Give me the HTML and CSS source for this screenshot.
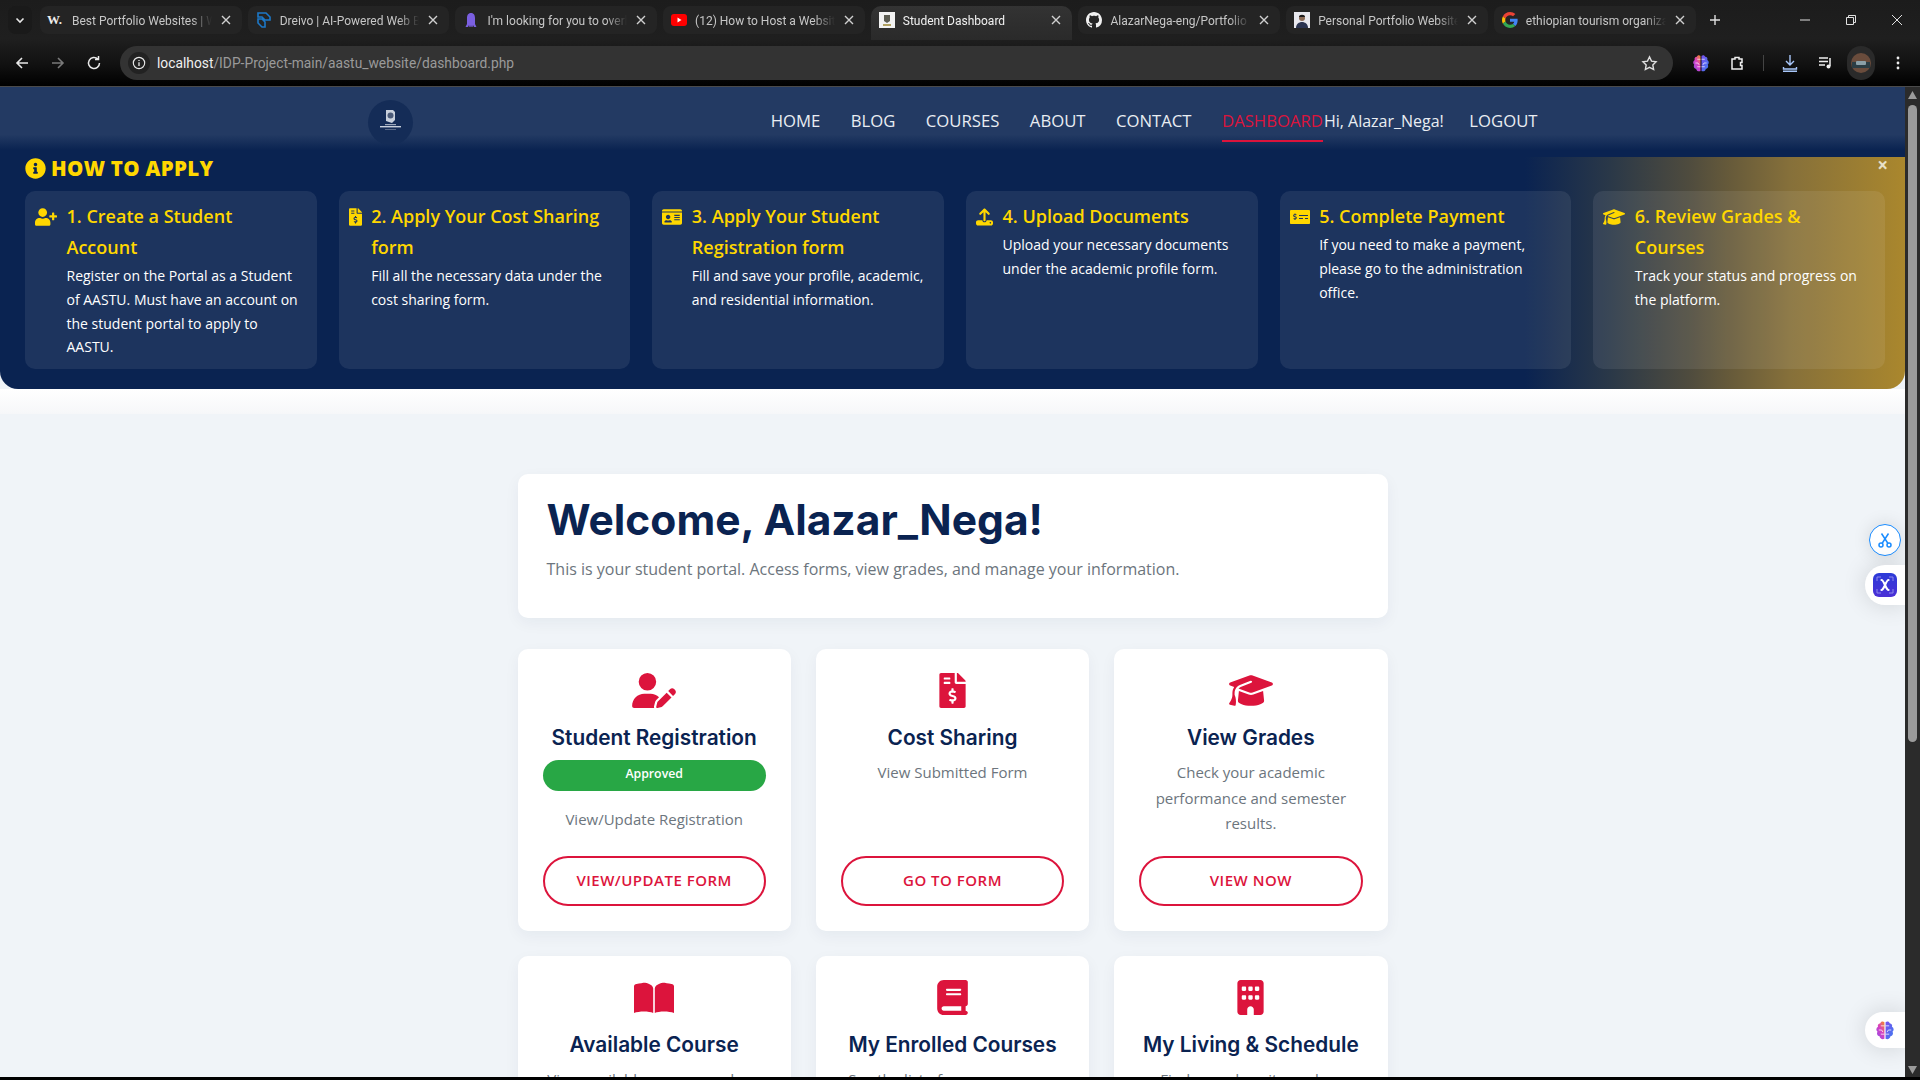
FILE: index.html
```html
<!DOCTYPE html>
<html lang="en">
<head>
<meta charset="utf-8">
<title>Student Dashboard</title>
<link rel="stylesheet" href="styles.css">
</head>
<body>
<svg class="defs" width="0" height="0">
  <defs>
    <linearGradient id="g-brain-l" x1="0.800" y1="0" x2="0" y2="1"><stop offset="0" stop-color="#f0803c"/><stop offset=".4" stop-color="#d83fc0"/><stop offset="1" stop-color="#8a50ee"/></linearGradient>
    <linearGradient id="g-brain-r" x1="0" y1="0" x2="1" y2="1"><stop offset="0" stop-color="#7a50ee"/><stop offset="1" stop-color="#3f7cf0"/></linearGradient>
  </defs>
  <symbol id="i-user-plus" viewBox="0 0 640 512"><path d="M624 208h-64v-64c0-8.800-7.200-16-16-16h-32c-8.800 0-16 7.200-16 16v64h-64c-8.800 0-16 7.200-16 16v32c0 8.800 7.200 16 16 16h64v64c0 8.800 7.200 16 16 16h32c8.800 0 16-7.200 16-16v-64h64c8.800 0 16-7.200 16-16v-32c0-8.800-7.200-16-16-16zm-400 48c70.700 0 128-57.300 128-128S294.700 0 224 0 96 57.300 96 128s57.300 128 128 128zm89.600 32h-16.700c-22.200 10.200-46.900 16-72.900 16s-50.600-5.800-72.900-16h-16.700C60.200 288 0 348.200 0 422.400V464c0 26.500 21.500 48 48 48h352c26.500 0 48-21.500 48-48v-41.600c0-74.200-60.200-134.400-134.400-134.400z"/></symbol>
  <symbol id="i-invoice" viewBox="0 0 384 512"><path d="M377 105L279.100 7c-4.500-4.500-10.600-7-17-7H256v128h128v-6.100c0-6.300-2.500-12.400-7-16.900zm-153 31V0H24C10.700 0 0 10.700 0 24v464c0 13.300 10.700 24 24 24h336c13.300 0 24-10.700 24-24V160H248c-13.200 0-24-10.800-24-24zM64 72c0-4.420 3.580-8 8-8h80c4.420 0 8 3.580 8 8v16c0 4.420-3.580 8-8 8H72c-4.420 0-8-3.580-8-8V72zm0 80v-16c0-4.420 3.580-8 8-8h80c4.420 0 8 3.580 8 8v16c0 4.420-3.580 8-8 8H72c-4.420 0-8-3.580-8-8zm144 263.880V440c0 4.420-3.580 8-8 8h-16c-4.420 0-8-3.580-8-8v-24.290c-11.290-.58-22.270-4.520-31.370-11.350-3.900-2.930-4.100-8.770-.57-12.140l11.750-11.210c2.770-2.640 6.890-2.760 10.130-.73 3.870 2.420 8.260 3.720 12.820 3.720h28.110c6.500 0 11.800-5.920 11.800-13.190 0-5.950-3.610-11.190-8.770-12.730l-45-13.500c-18.590-5.580-31.580-23.420-31.580-43.390 0-24.520 19.050-44.440 42.670-45.070V232c0-4.420 3.580-8 8-8h16c4.420 0 8 3.580 8 8v24.290c11.290.58 22.270 4.510 31.370 11.350 3.900 2.930 4.100 8.770.57 12.140l-11.750 11.210c-2.770 2.640-6.890 2.760-10.130.73-3.870-2.430-8.260-3.720-12.820-3.720h-28.110c-6.500 0-11.800 5.920-11.800 13.190 0 5.950 3.610 11.190 8.770 12.730l45 13.500c18.590 5.580 31.580 23.420 31.580 43.390 0 24.530-19.050 44.440-42.670 45.070z"/></symbol>
  <symbol id="i-cap" viewBox="0 0 640 512"><path d="M320 32c-8.100 0-16.100 1.400-23.700 4.100L15.800 137.400C6.300 140.900 0 149.900 0 160s6.300 19.100 15.800 22.600l57.900 20.900C57.300 229.300 48 259.800 48 291.900v28.100c0 28.400-10.800 57.700-22.300 80.800-6.500 13-13.900 25.800-22.500 37.600C0 442.700-.9 448.300 .9 453.400s6 8.900 11.200 10.200l64 16c4.200 1.100 8.700 .3 12.400-2s6.300-6.100 7.100-10.400c8.600-42.800 4.300-81.200-2.100-108.700C90.300 344.300 86 329.800 80 316.500V291.900c0-30.200 10.200-58.700 27.900-81.500c12.900-15.500 29.600-28 49.200-35.700l157-61.700c8.200-3.200 17.500 .8 20.700 9s-.8 17.500-9 20.700l-157 61.700c-12.400 4.900-23.300 12.400-32.200 21.600l159.600 57.600c7.600 2.700 15.600 4.100 23.700 4.100s16.100-1.400 23.700-4.100L624.200 182.600c9.500-3.400 15.800-12.500 15.800-22.600s-6.300-19.100-15.800-22.600L343.700 36.100C336.100 33.400 328.100 32 320 32zM128 408c0 35.300 86 72 192 72s192-36.700 192-72L496.700 262.600 354.500 314c-11.100 4-22.800 6-34.500 6s-23.500-2-34.500-6L143.300 262.600 128 408z"/></symbol>
  <symbol id="i-idcard" viewBox="0 0 576 512"><path d="M528 32H48C21.500 32 0 53.500 0 80v16h576V80c0-26.500-21.500-48-48-48zM0 432c0 26.500 21.500 48 48 48h480c26.500 0 48-21.500 48-48V128H0v304zm352-232c0-4.400 3.600-8 8-8h144c4.400 0 8 3.600 8 8v16c0 4.400-3.600 8-8 8H360c-4.400 0-8-3.600-8-8v-16zm0 64c0-4.400 3.600-8 8-8h144c4.400 0 8 3.600 8 8v16c0 4.400-3.600 8-8 8H360c-4.400 0-8-3.600-8-8v-16zm0 64c0-4.400 3.600-8 8-8h144c4.400 0 8 3.600 8 8v16c0 4.400-3.600 8-8 8H360c-4.400 0-8-3.600-8-8v-16zM176 192c35.300 0 64 28.700 64 64s-28.700 64-64 64-64-28.700-64-64 28.700-64 64-64zM67.100 396.200C75.500 370.500 99.600 352 128 352h8.200c12.300 5.100 25.700 8 39.800 8s27.600-2.900 39.800-8h8.200c28.400 0 52.500 18.500 60.900 44.200 3.200 9.900-5.200 19.800-15.600 19.800H82.700c-10.400 0-18.800-10-15.600-19.800z"/></symbol>
  <symbol id="i-upload" viewBox="0 0 512 512"><path d="M288 109.300V352c0 17.700-14.300 32-32 32s-32-14.300-32-32V109.300l-73.400 73.400c-12.500 12.500-32.800 12.500-45.300 0s-12.500-32.800 0-45.300l128-128c12.500-12.500 32.800-12.500 45.300 0l128 128c12.500 12.500 12.500 32.800 0 45.300s-32.800 12.500-45.300 0L288 109.300zM64 352H192c0 35.300 28.700 64 64 64s64-28.700 64-64H448c35.300 0 64 28.700 64 64v32c0 35.300-28.700 64-64 64H64c-35.300 0-64-28.700-64-64V416c0-35.300 28.700-64 64-64zM432 456a24 24 0 1 0 0-48 24 24 0 1 0 0 48z"/></symbol>
  <symbol id="i-money" viewBox="0 0 640 512"><path d="M608 32H32C14.330 32 0 46.330 0 64v384c0 17.670 14.330 32 32 32h576c17.670 0 32-14.330 32-32V64c0-17.670-14.330-32-32-32zM176 327.880V344c0 4.420-3.580 8-8 8h-16c-4.420 0-8-3.580-8-8v-16.290c-11.290-.58-22.270-4.520-31.370-11.350-3.900-2.930-4.100-8.770-.57-12.140l11.750-11.210c2.770-2.640 6.890-2.760 10.130-.73 3.870 2.420 8.260 3.720 12.820 3.720h28.110c6.500 0 11.800-5.920 11.800-13.190 0-5.950-3.610-11.190-8.770-12.730l-45-13.500c-18.590-5.580-31.580-23.420-31.580-43.390 0-24.520 19.050-44.440 42.670-45.070V152c0-4.420 3.580-8 8-8h16c4.420 0 8 3.580 8 8v16.290c11.290.58 22.270 4.510 31.370 11.350 3.900 2.930 4.100 8.770.57 12.140l-11.750 11.210c-2.770 2.640-6.890 2.760-10.130.73-3.870-2.430-8.260-3.720-12.820-3.720h-28.110c-6.500 0-11.800 5.920-11.800 13.190 0 5.950 3.610 11.190 8.770 12.730l45 13.500c18.590 5.580 31.580 23.420 31.580 43.390 0 24.530-19.050 44.440-42.670 45.070zM416 312c0 4.420-3.580 8-8 8H296c-4.420 0-8-3.580-8-8v-16c0-4.420 3.580-8 8-8h112c4.420 0 8 3.580 8 8v16zm160 0c0 4.420-3.580 8-8 8h-80c-4.420 0-8-3.580-8-8v-16c0-4.420 3.580-8 8-8h80c4.420 0 8 3.580 8 8v16zm0-96c0 4.420-3.580 8-8 8H296c-4.420 0-8-3.580-8-8v-16c0-4.420 3.580-8 8-8h272c4.420 0 8 3.580 8 8v16z"/></symbol>
  <symbol id="i-info" viewBox="0 0 512 512"><path d="M256 8C119.043 8 8 119.083 8 256c0 136.997 111.043 248 248 248s248-111.003 248-248C504 119.083 392.957 8 256 8zm0 110c23.196 0 42 18.804 42 42s-18.804 42-42 42-42-18.804-42-42 18.804-42 42-42zm56 254c0 6.627-5.373 12-12 12h-88c-6.627 0-12-5.373-12-12v-24c0-6.627 5.373-12 12-12h12v-64h-12c-6.627 0-12-5.373-12-12v-24c0-6.627 5.373-12 12-12h64c6.627 0 12 5.373 12 12v100h12c6.627 0 12 5.373 12 12v24z"/></symbol>
  <symbol id="i-user-pen" viewBox="0 0 640 512"><path d="M224 256A128 128 0 1 0 224 0a128 128 0 1 0 0 256zm-45.700 48C79.800 304 0 383.800 0 482.300C0 498.700 13.300 512 29.700 512H322.800c-3.100-8.800-3.700-18.400-1.400-27.800l15-60.100c2.800-11.300 8.600-21.500 16.800-29.700l40.300-40.300c-32.100-31-75.700-50.100-123.900-50.100H178.300zm435.500-68.300c-15.600-15.600-40.900-15.600-56.600 0l-29.400 29.400 71 71 29.400-29.400c15.600-15.600 15.600-40.900 0-56.600l-14.400-14.400zM375.900 417c-4.100 4.100-7 9.200-8.400 14.900l-15 60.100c-1.400 5.500 .2 11.200 4.200 15.200s9.700 5.600 15.200 4.200l60.100-15c5.600-1.400 10.800-4.300 14.900-8.400L576.100 358.700l-71-71L375.900 417z"/></symbol>
  <symbol id="i-book-open" viewBox="0 0 40 35"><path d="M0 6.500C0 5 1 4 2.500 4 8 3 12 2 14 3.500c3 1 5.200 2.800 5.200 5V33C15 31 5 31 0 33zM40 6.500C40 5 39 4 37.500 4 32 3 28 2 26 3.500c-3 1-5.200 2.800-5.200 5V33c4.200-2 14.200-2 19.200 0z"/></symbol>
  <symbol id="i-book" viewBox="0 0 448 512"><path d="M96 0C43 0 0 43 0 96V416c0 53 43 96 96 96H384h32c17.700 0 32-14.300 32-32s-14.300-32-32-32V384c17.700 0 32-14.300 32-32V32c0-17.700-14.300-32-32-32H384 96zm0 384H352v64H96c-17.700 0-32-14.300-32-32s14.300-32 32-32zm32-240c0-8.800 7.200-16 16-16H336c8.800 0 16 7.200 16 16s-7.200 16-16 16H144c-8.800 0-16-7.200-16-16zm16 48H336c8.800 0 16 7.200 16 16s-7.200 16-16 16H144c-8.800 0-16-7.200-16-16s7.200-16 16-16z"/></symbol>
  <symbol id="i-building" viewBox="0 0 384 512"><path d="M48 0C21.500 0 0 21.500 0 48V464c0 26.500 21.500 48 48 48h96V432c0-26.500 21.500-48 48-48s48 21.500 48 48v80h96c26.500 0 48-21.500 48-48V48c0-26.500-21.500-48-48-48H48zM64 240c0-8.800 7.200-16 16-16h32c8.800 0 16 7.200 16 16v32c0 8.800-7.200 16-16 16H80c-8.800 0-16-7.200-16-16V240zm112-16h32c8.800 0 16 7.200 16 16v32c0 8.800-7.200 16-16 16H176c-8.800 0-16-7.200-16-16V240c0-8.800 7.200-16 16-16zm80 16c0-8.800 7.200-16 16-16h32c8.800 0 16 7.200 16 16v32c0 8.800-7.200 16-16 16H272c-8.800 0-16-7.200-16-16V240zM80 96h32c8.800 0 16 7.200 16 16v32c0 8.800-7.200 16-16 16H80c-8.800 0-16-7.200-16-16V112c0-8.800 7.200-16 16-16zm80 16c0-8.800 7.200-16 16-16h32c8.800 0 16 7.200 16 16v32c0 8.800-7.200 16-16 16H176c-8.800 0-16-7.200-16-16V112zM272 96h32c8.800 0 16 7.200 16 16v32c0 8.800-7.200 16-16 16H272c-8.800 0-16-7.200-16-16V112c0-8.800 7.200-16 16-16z"/></symbol>
  <symbol id="i-x" viewBox="0 0 12 12"><path d="M2 2l8 8M10 2l-8 8" stroke="currentColor" stroke-width="1.400" fill="none"/></symbol>
  <symbol id="i-brain" viewBox="0 0 24 24"><path fill="url(#g-brain-l)" d="M11.300 2.800C9.700 1 7 1.600 6.400 3.800 4.100 4 2.800 6.100 3.600 8.100 1.200 9.300 .9 12.600 3 14.200c-1.400 2.200-.1 5.200 2.500 5.400.3 2.900 3.400 4.300 5.800 2.900z"/><path fill="url(#g-brain-r)" d="M12.700 2.800C14.300 1 17 1.600 17.600 3.800c2.300.2 3.600 2.300 2.800 4.300 2.400 1.200 2.700 4.500.6 6.100 1.400 2.200.1 5.200-2.500 5.400-.3 2.900-3.400 4.300-5.800 2.900z"/><path fill="none" stroke="#fff" stroke-width=".9" d="M7 7h4.300M4.500 12h3.500l1.500 2.500M7 17h4.300M17 7h-4.300M19.500 12H16l-1.500 2.500M17 17h-4.300"/></symbol>
</svg>

<header class="chrome">
  <div class="tabstrip">
    <div class="tab-menu"><svg width="10" height="10" viewBox="0 0 10 10"><path d="M1.500 3.500L5 7l3.500-3.500" fill="none" stroke="#e8e8e8" stroke-width="1.600"/></svg></div>
    <div class="tab"><span class="fav fav-w">W.</span><span class="tab-title">Best Portfolio Websites | Webflow</span><svg class="tab-x"><use href="#i-x"/></svg></div>
    <div class="tab"><svg class="fav" viewBox="0 0 16 16"><path d="M2 1h8l4 4v3H9L6 5H2zM2 7h4l3 3v5H6L2 11z" fill="none" stroke="#1c78c8" stroke-width="1.600"/></svg><span class="tab-title">Dreivo | AI-Powered Web Builder</span><svg class="tab-x"><use href="#i-x"/></svg></div>
    <div class="tab"><svg class="fav" viewBox="0 0 16 16"><path d="M8 1C5 1 4 3.500 4 6v6l-1.500 3H5l1-2 .5 2h1l.5-2 .5 2h1l.5-2 1 2h2.500L12 12V6c0-2.500-1-5-4-5z" fill="#7a5fe0"/></svg><span class="tab-title">I'm looking for you to overhaul</span><svg class="tab-x"><use href="#i-x"/></svg></div>
    <div class="tab"><svg class="fav" viewBox="0 0 16 16"><rect y="2" width="16" height="12" rx="3" fill="#f00"/><path d="M6.500 5.500v5l4-2.500z" fill="#fff"/></svg><span class="tab-title">(12) How to Host a Website</span><svg class="tab-x"><use href="#i-x"/></svg></div>
    <div class="tab tab-active"><svg class="fav" viewBox="0 0 16 16"><rect width="16" height="16" fill="#f2f2f2"/><path d="M5 3h6v6l-3 2-3-2z" fill="#5c5c52"/><rect x="4" y="12" width="8" height="2" fill="#b0a060"/></svg><span class="tab-title">Student Dashboard</span><svg class="tab-x"><use href="#i-x"/></svg></div>
    <div class="tab"><svg class="fav" viewBox="0 0 16 16"><path fill="#f0f0f0" d="M8 0C3.580 0 0 3.580 0 8c0 3.540 2.290 6.530 5.470 7.590.4.070.55-.17.55-.38 0-.19-.01-.82-.01-1.490-2.010.37-2.530-.49-2.690-.94-.09-.23-.48-.94-.82-1.130-.28-.15-.68-.52-.01-.53.63-.01 1.080.58 1.230.82.72 1.210 1.870.87 2.330.66.07-.52.28-.87.51-1.070-1.780-.2-3.640-.89-3.640-3.950 0-.87.31-1.590.82-2.150-.08-.2-.36-1.020.08-2.120 0 0 .67-.21 2.200.82.64-.18 1.320-.27 2-.27.68 0 1.360.09 2 .27 1.530-1.040 2.200-.82 2.200-.82.44 1.100.16 1.920.08 2.120.51.56.82 1.270.82 2.150 0 3.070-1.870 3.750-3.650 3.950.29.25.54.73.54 1.480 0 1.070-.01 1.930-.01 2.200 0 .21.15.46.55.38A8.013 8.013 0 0016 8c0-4.420-3.580-8-8-8z"/></svg><span class="tab-title">AlazarNega-eng/Portfolio</span><svg class="tab-x"><use href="#i-x"/></svg></div>
    <div class="tab"><svg class="fav" viewBox="0 0 16 16"><rect width="16" height="16" fill="#e8e8ee"/><circle cx="8" cy="6" r="3" fill="#8a6a55"/><path d="M2 16c0-4 3-6 6-6s6 2 6 6z" fill="#2a3350"/><path d="M5 5c0-3 6-3 6 0z" fill="#1a1a1a"/></svg><span class="tab-title">Personal Portfolio Website</span><svg class="tab-x"><use href="#i-x"/></svg></div>
    <div class="tab"><svg class="fav" viewBox="0 0 48 48"><path fill="#EA4335" d="M24 9.500c3.540 0 6.710 1.220 9.210 3.600l6.850-6.850C35.900 2.380 30.470 0 24 0 14.620 0 6.510 5.380 2.560 13.220l7.980 6.190C12.430 13.720 17.740 9.500 24 9.500z"/><path fill="#4285F4" d="M46.980 24.550c0-1.570-.15-3.090-.38-4.550H24v9.020h12.940c-.58 2.960-2.260 5.480-4.780 7.180l7.730 6c4.510-4.180 7.090-10.360 7.090-17.650z"/><path fill="#FBBC05" d="M10.530 28.590c-.48-1.450-.76-2.990-.76-4.590s.27-3.140.76-4.590l-7.980-6.190C.92 16.460 0 20.120 0 24c0 3.880.92 7.540 2.560 10.780l7.970-6.190z"/><path fill="#34A853" d="M24 48c6.480 0 11.930-2.130 15.890-5.810l-7.730-6c-2.150 1.450-4.920 2.300-8.160 2.300-6.260 0-11.570-4.220-13.470-9.910l-7.980 6.190C6.510 42.620 14.620 48 24 48z"/></svg><span class="tab-title">ethiopian tourism organization</span><svg class="tab-x"><use href="#i-x"/></svg></div>
    <svg class="tab-plus" viewBox="0 0 12 12"><path d="M6 1v10M1 6h10" stroke="#e0e0e0" stroke-width="1.400"/></svg>
    <div class="win-controls">
      <svg viewBox="0 0 12 12"><path d="M1 6h10" stroke="#e0e0e0"/></svg>
      <svg viewBox="0 0 12 12"><path d="M1.500 3.500h7v7h-7zM3.500 3.500v-2h7v7h-2" fill="none" stroke="#e0e0e0"/></svg>
      <svg viewBox="0 0 12 12"><path d="M1 1l10 10M11 1L1 11" stroke="#e0e0e0"/></svg>
    </div>
  </div>
  <div class="toolbar">
    <svg class="tb-ic" viewBox="0 0 16 16"><path d="M14 8H3M8 3L3 8l5 5" fill="none" stroke="#e8e8e8" stroke-width="1.600"/></svg>
    <svg class="tb-ic" viewBox="0 0 16 16"><path d="M2 8h11M8 3l5 5-5 5" fill="none" stroke="#7a7a7a" stroke-width="1.600"/></svg>
    <svg class="tb-ic" viewBox="0 0 16 16"><path d="M13.500 8A5.500 5.500 0 1 1 11.800 4M12.500 1v3.500H9" fill="none" stroke="#e8e8e8" stroke-width="1.500"/></svg>
    <div class="omnibox">
      <span class="site-info"><svg viewBox="0 0 16 16" width="14" height="14"><circle cx="8" cy="8" r="6.500" fill="none" stroke="#e8e8e8" stroke-width="1.300"/><path d="M8 7v4.500M8 4.500v1.300" stroke="#e8e8e8" stroke-width="1.500"/></svg></span>
      <span class="url"><span class="url-host">localhost</span>/IDP-Project-main/aastu_website/dashboard.php</span>
      <svg class="star" viewBox="0 0 16 16"><path d="M8 1.800l1.900 4 4.300.6-3.100 3 .8 4.300L8 11.600l-3.900 2.100.8-4.300-3.100-3 4.300-.6z" fill="none" stroke="#e0e0e0" stroke-width="1.300"/></svg>
    </div>
    <div class="tb-right">
      <svg class="tb-ic brain"><use href="#i-brain"/></svg>
      <svg class="tb-ic ext" viewBox="0 0 16 16"><path d="M3 4h3V2.500h4V4h3v3.500h-1.500v3H13V14H3z" fill="none" stroke="#f0f0f0" stroke-width="1.500"/></svg>
      <span class="tb-sep"></span>
      <svg class="tb-ic dl" viewBox="0 0 16 18"><path d="M8 1v9M4 7l4 4 4-4M1.500 13v2h13v-2" fill="none" stroke="#a8c7fa" stroke-width="1.400"/><rect x="1" y="16.500" width="14" height="1.500" fill="#a8c7fa"/></svg>
      <svg class="tb-ic" viewBox="0 0 16 16"><path d="M1 3h9M1 6.500h9M1 10h6" stroke="#eee" stroke-width="1.500"/><path d="M12 3v8" stroke="#eee" stroke-width="1.500"/><circle cx="10.500" cy="11.500" r="2" fill="#eee"/></svg>
      <span class="avatar"><svg viewBox="0 0 20 20" width="20" height="20"><circle cx="10" cy="10" r="10" fill="#6a4c3c"/><rect x="1" y="9" width="18" height="6" fill="#2b3d44"/><rect x="5" y="8" width="10" height="4" rx="1" fill="#8ba0a8"/></svg></span>
      <svg class="tb-ic" viewBox="0 0 16 16"><circle cx="8" cy="3" r="1.400" fill="#eee"/><circle cx="8" cy="8" r="1.400" fill="#eee"/><circle cx="8" cy="13" r="1.400" fill="#eee"/></svg>
    </div>
  </div>
</header>

<div class="window">
  <div class="viewport">
    <nav class="site-header">
      <div class="site-container">
        <span class="logo"><svg viewBox="0 0 44 44" width="44" height="44"><path d="M18 10h7l2 2v8l-3 3-6-2z" fill="#c8d0dc"/><circle cx="22.500" cy="15.500" r="3" fill="#4a5a78"/><rect x="17" y="24" width="11" height="1.200" fill="#9aa6ba"/><rect x="12" y="26" width="21" height="1.400" fill="#c8d0dc"/><rect x="17" y="29" width="11" height="1" fill="#5a6a88"/></svg></span>
        <ul class="site-nav">
          <li><a class="nav-link">HOME</a></li>
          <li><a class="nav-link">BLOG</a></li>
          <li><a class="nav-link">COURSES</a></li>
          <li><a class="nav-link">ABOUT</a></li>
          <li><a class="nav-link">CONTACT</a></li>
          <li class="nav-tight"><a class="nav-link is-active">DASHBOARD</a><a class="nav-link nav-greet">Hi, Alazar_Nega!</a></li>
          <li><a class="nav-link">LOGOUT</a></li>
        </ul>
      </div>
    </nav>

    <section class="apply">
      <span class="apply-close">×</span>
      <h2 class="apply-title"><svg class="apply-info"><use href="#i-info"/></svg>HOW TO APPLY</h2>
      <div class="steps">
        <article class="step">
          <svg class="step-ic ic-22"><use href="#i-user-plus"/></svg>
          <div class="step-body"><h3>1. Create a Student Account</h3><p>Register on the Portal as a Student of AASTU. Must have an account on the student portal to apply to AASTU.</p></div>
        </article>
        <article class="step">
          <svg class="step-ic ic-13"><use href="#i-invoice"/></svg>
          <div class="step-body"><h3>2. Apply Your Cost Sharing form</h3><p>Fill all the necessary data under the cost sharing form.</p></div>
        </article>
        <article class="step">
          <svg class="step-ic ic-20"><use href="#i-idcard"/></svg>
          <div class="step-body"><h3>3. Apply Your Student Registration form</h3><p>Fill and save your profile, academic, and residential information.</p></div>
        </article>
        <article class="step">
          <svg class="step-ic ic-17"><use href="#i-upload"/></svg>
          <div class="step-body"><h3>4. Upload Documents</h3><p>Upload your necessary documents under the academic profile form.</p></div>
        </article>
        <article class="step">
          <svg class="step-ic ic-20"><use href="#i-money"/></svg>
          <div class="step-body"><h3>5. Complete Payment</h3><p>If you need to make a payment, please go to the administration office.</p></div>
        </article>
        <article class="step">
          <svg class="step-ic ic-22"><use href="#i-cap"/></svg>
          <div class="step-body"><h3>6. Review Grades &amp; Courses</h3><p>Track your status and progress on the platform.</p></div>
        </article>
      </div>
    </section>

    <div class="band"></div>

    <main class="dash">
      <div class="dash-inner">
        <section class="welcome">
          <h1>Welcome, Alazar_Nega!</h1>
          <p>This is your student portal. Access forms, view grades, and manage your information.</p>
        </section>
        <div class="cards">
          <article class="card">
            <svg class="card-ic w-44"><use href="#i-user-pen"/></svg>
            <h3>Student Registration</h3>
            <span class="badge">Approved</span>
            <p>View/Update Registration</p>
            <a class="btn">VIEW/UPDATE FORM</a>
          </article>
          <article class="card">
            <svg class="card-ic w-27"><use href="#i-invoice"/></svg>
            <h3>Cost Sharing</h3>
            <p>View Submitted Form</p>
            <a class="btn">GO TO FORM</a>
          </article>
          <article class="card">
            <svg class="card-ic w-44"><use href="#i-cap"/></svg>
            <h3>View Grades</h3>
            <p>Check your academic performance and semester results.</p>
            <a class="btn">VIEW NOW</a>
          </article>
          <article class="card">
            <svg class="card-ic w-40"><use href="#i-book-open"/></svg>
            <h3>Available Course</h3>
            <p>View available courses and are currently open.</p>
            <a class="btn">VIEW COURSES</a>
          </article>
          <article class="card">
            <svg class="card-ic w-31"><use href="#i-book"/></svg>
            <h3>My Enrolled Courses</h3>
            <p>See the list of courses you are currently taking.</p>
            <a class="btn">VIEW COURSES</a>
          </article>
          <article class="card">
            <svg class="card-ic w-27"><use href="#i-building"/></svg>
            <h3>My Living &amp; Schedule</h3>
            <p>Find your dormitory, class schedule and details.</p>
            <a class="btn">VIEW NOW</a>
          </article>
        </div>
      </div>
    </main>

    <div class="float-scissors"><svg viewBox="0 0 16 16" width="16" height="16"><circle cx="4" cy="13" r="2" fill="none" stroke="#1a8cff" stroke-width="1.500"/><circle cx="12" cy="13" r="2" fill="none" stroke="#1a8cff" stroke-width="1.500"/><path d="M5 11.500L11.500 1.500M11 11.500L4.500 1.500" stroke="#1a8cff" stroke-width="1.500"/></svg></div>
    <div class="float-pill float-x"><span class="x-tile"><svg viewBox="0 0 24 24" width="24" height="24"><path d="M8.500 7c2.500 0 4.500 10 7 10M15.500 7c-2.500 0-4.500 10-7 10" fill="none" stroke="#fff" stroke-width="2.200" stroke-linecap="round"/><path d="M4 8V4h4M20 8V4h-4M4 16v4h4M20 16v4h-4" fill="none" stroke="#8f89ea" stroke-width="1"/></svg></span></div>
    <div class="float-pill float-brain"><svg width="20" height="20"><use href="#i-brain"/></svg></div>
  </div>
  <aside class="scrollbar">
    <svg class="sb-arrow" viewBox="0 0 9 8"><path d="M4.500 0L9 8H0z" fill="#9b9b9b"/></svg>
    <div class="sb-track"><div class="sb-thumb"></div></div>
    <svg class="sb-arrow" viewBox="0 0 9 8"><path d="M0 0h9L4.500 8z" fill="#9b9b9b"/></svg>
  </aside>
</div>
<div class="bottom-edge"></div>
</body>
</html>
```

FILE: styles.css
```css
* { box-sizing: border-box; }
html, body { margin: 0; height: 100%; }
body {
  height: 1080px;
  overflow: hidden;
  display: flex;
  flex-direction: column;
  background: #000;
  font-family: "Open Sans", "Liberation Sans", sans-serif;
}
.defs { position: absolute; }
h1, h2, h3, p, ul { margin: 0; padding: 0; }
ul { list-style: none; }

/* browser chrome */
.chrome {
  height: 86px;
  flex: none;
  background: linear-gradient(#1c1c1c 0, #1f1f1f 45%, #111 75%, #000 100%);
  display: flex;
  flex-direction: column;
}
.tabstrip {
  height: 40px;
  display: flex;
  align-items: flex-start;
  padding-top: 6px;
  flex: none;
}
.tab-menu {
  width: 24px;
  height: 28px;
  margin: 0 8px 0 8px;
  border-radius: 8px;
  background: #1a1a1a;
  display: flex;
  align-items: center;
  justify-content: center;
}
.tab {
  width: 201.700px;
  height: 28px;
  margin-right: 6px;
  border-radius: 8px;
  background: #242424;
  display: flex;
  align-items: center;
  padding: 2px 10px 0 8px;
  color: #c7c7c7;
  font: 12px "Roboto", "Liberation Sans", sans-serif;
  position: relative;
}
.tab-active {
  height: 34px;
  background: linear-gradient(#333, #2a2a2a);
  border-radius: 10px 10px 0 0;
  color: #f1f1f1;
  padding-bottom: 6px;
}
.fav { width: 16px; height: 16px; flex: none; margin-right: 8px; margin-top: -2px; }
.fav-w { color: #eee; font: 700 13px/16px "Liberation Serif", serif; width: 18px; margin-right: 7px; margin-left: -1px; }
.tab-title {
  flex: 1;
  min-width: 0;
  white-space: nowrap;
  overflow: hidden;
  -webkit-mask-image: linear-gradient(90deg, #000 85%, transparent);
  mask-image: linear-gradient(90deg, #000 85%, transparent);
}
.tab-x { width: 12px; height: 12px; flex: none; margin: -2px 0 0 8px; color: #d0d0d0; }
.tab-plus { width: 12px; height: 12px; margin: 8px 0 0 7px; flex: none; }
.win-controls { margin-left: auto; display: flex; gap: 34px; padding: 8px 17px 0 0; }
.win-controls svg { width: 12px; height: 12px; }

.toolbar {
  flex: none;
  height: 34px;
  margin-top: 6px;
  display: flex;
  align-items: center;
  padding-left: 14px;
}
.tb-ic { width: 16px; height: 16px; flex: none; margin-right: 20px; }
.omnibox {
  width: 1553px;
  height: 34px;
  margin-left: -2px;
  border-radius: 17px;
  background: #333;
  display: flex;
  align-items: center;
  padding: 0 15px 0 8px;
}
.site-info {
  width: 22px; height: 22px; border-radius: 50%;
  background: #222;
  display: flex; align-items: center; justify-content: center;
  flex: none;
  margin-right: 7px;
}
.url { flex: 1; font: 13.800px "Roboto", "Liberation Sans", sans-serif; color: #9a9a9a; white-space: nowrap; }
.url-host { color: #f0f0f0; }
.star { width: 17px; height: 17px; }
.tb-right { display: flex; align-items: center; padding-left: 19px; }
.tb-right .tb-ic { margin-right: 20px; }
.tb-right .brain { width: 18px; height: 18px; margin-right: 19px; }
.tb-right .ext { margin-right: 18px; }
.tb-right .dl { height: 18px; margin-right: 20px; }
.tb-sep { width: 1px; height: 16px; background: #444; margin-right: 18px; }
.avatar {
  width: 28px; height: 34px; border-radius: 14px; background: #2a2a2a;
  display: flex; align-items: center; justify-content: center;
  margin-right: 15px; margin-left: -7px; flex: none;
}
.tb-right .avatar + .tb-ic { margin-right: 0; }

/* window */
.window { flex: 1; min-height: 0; display: flex; border-top: 1px solid #4a4a4a; }
.viewport {
  flex: 1;
  min-width: 0;
  overflow: hidden;
  position: relative;
  background: #f0f4f8;
}
.bottom-edge { height: 3px; flex: none; background: #000; }

/* scrollbar */
.scrollbar {
  width: 15px;
  flex: none;
  background: #2b2b2b;
  display: flex;
  flex-direction: column;
  align-items: center;
  padding: 4px 0 3px;
}
.sb-arrow { width: 9px; height: 8px; flex: none; }
.sb-track { flex: 1; width: 9px; padding-top: 6px; }
.sb-thumb { height: 637px; border-radius: 5px; background: #9b9b9b; }

/* site header */
.site-header {
  height: 70px;
  background: linear-gradient(#233a63 0, #233a63 68%, #0a2351 90%);
}
.site-container {
  width: 1200px;
  margin: 0 auto;
  padding: 0 15px;
  height: 70px;
  display: flex;
  align-items: center;
  justify-content: space-between;
}
.logo {
  width: 45px; height: 45px; border-radius: 50%;
  background: #142c57;
  display: block;
}
.site-nav { display: flex; gap: 30.500px; margin-top: -2px; }
.nav-tight { display: flex; margin-right: -5px; }
.nav-link {
  display: block;
  position: relative;
  color: #e9edf2;
  font-size: 16.700px;
  font-weight: 500;
  line-height: 24px;
  white-space: nowrap;
}
.nav-greet { font-size: 16px; margin-left: 1px; }
.is-active { color: #dc143c; }
.is-active::after {
  content: "";
  position: absolute;
  left: 0; right: 0; top: 31px;
  height: 2px;
  background: #dc143c;
}

/* how to apply */
.apply {
  position: relative;
  padding: 0 20px 20px 25px;
  border-radius: 0 0 18px 18px;
  background: linear-gradient(90deg, #0a2351 0, #0a2351 1525px, #2a3848 1610px, #4e4b3e 1688px, #665a3a 1729px, #86703a 1790px, #aa872d 1905px);
}
.apply-close {
  position: absolute;
  right: 17px; top: 1px;
  color: #e8e0c8;
  font-size: 19px;
  font-weight: 700;
  line-height: 14px;
}
.apply-title {
  display: flex;
  align-items: center;
  height: 22px;
  margin-bottom: 12px;
  color: #ffd700;
  font-size: 20.500px;
  font-weight: 800;
  letter-spacing: .3px;
  line-height: 22px;
}
.apply-info { width: 21px; height: 21px; fill: #ffd700; margin-right: 5px; flex: none; }
.steps { display: grid; grid-template-columns: repeat(6, 1fr); gap: 22px; }
.step {
  display: flex;
  gap: 9.500px;
  padding: 10px;
  border-radius: 10px;
  background: rgba(255, 255, 255, .08);
}
.step-ic { height: 18px; fill: #ffd700; flex: none; margin-top: 7px; }
.ic-22 { width: 22px; }
.ic-13 { width: 13px; }
.ic-20 { width: 20px; }
.ic-17 { width: 17px; }
.step-body { flex: 1; min-width: 0; padding-right: 1px; }
.step h3 {
  color: #ffd700;
  font-size: 18px;
  font-weight: 600;
  line-height: 31px;
  margin-bottom: 1px;
}
.step p { color: #fff; font-size: 14px; line-height: 23.800px; }

.band { height: 25px; background: linear-gradient(#fff, #f6f7f9); }

/* dashboard */
.dash { padding-top: 60px; background: #f0f4f8; }
.dash-inner { width: 870px; margin: 0 auto; }
.welcome {
  height: 144px;
  padding: 21px 30px 0 29px;
  border-radius: 10px;
  background: #fff;
  box-shadow: 0 5px 15px rgba(10, 35, 81, .05);
  margin-bottom: 31px;
}
.welcome h1 {
  color: #0a2351;
  font-family: "Inter", "Liberation Sans", sans-serif;
  font-size: 42.500px;
  font-weight: 700;
  line-height: 50px;
  margin-bottom: 11px;
}
.welcome p { color: #6c757d; font-size: 16px; line-height: 26px; }
.cards { display: grid; grid-template-columns: repeat(3, 1fr); gap: 25px; }
.card {
  display: flex;
  flex-direction: column;
  align-items: center;
  text-align: center;
  padding: 24px 25px 25px;
  border-radius: 10px;
  background: #fff;
  box-shadow: 0 5px 15px rgba(10, 35, 81, .05);
}
.card-ic { height: 35px; fill: #dc143c; flex: none; margin-bottom: 14px; }
.w-44 { width: 44px; }
.w-40 { width: 40px; }
.w-31 { width: 31px; }
.w-27 { width: 27px; }
.card h3 {
  color: #0a2351;
  font-family: "Inter", "Liberation Sans", sans-serif;
  font-size: 20.800px;
  font-weight: 600;
  line-height: 31px;
  margin-bottom: 7px;
}
.badge {
  width: 100%;
  height: 31px;
  margin: 0 0 16px;
  border-radius: 16px;
  background: #28a745;
  color: #fff;
  font-size: 12.300px;
  font-weight: 600;
  line-height: 28px;
}
.card p { color: #6c757d; font-size: 15px; line-height: 25.500px; margin-bottom: 19px; }
.btn {
  display: block;
  width: 100%;
  height: 50px;
  margin-top: auto;
  border: 2px solid #dc143c;
  border-radius: 25px;
  color: #dc143c;
  font-size: 15px;
  font-weight: 600;
  letter-spacing: .5px;
  line-height: 45px;
}

/* floating extensions */
.float-scissors {
  position: absolute;
  top: 437px; right: 4px;
  width: 32px; height: 32px;
  border: 1px solid #1a8cff;
  border-radius: 50%;
  background: #fff;
  display: flex; align-items: center; justify-content: center;
  box-shadow: 0 0 18px rgba(0, 0, 0, .12);
}
.float-pill {
  position: absolute;
  right: 0;
  width: 40px;
  border-radius: 20px 0 0 20px;
  background: #fff;
  display: flex; align-items: center; justify-content: center;
  box-shadow: 0 0 24px rgba(0, 0, 0, .14);
}
.float-x { top: 478px; height: 40px; }
.float-brain { top: 925px; height: 36px; border-radius: 18px 0 0 18px; }
.x-tile {
  width: 24px; height: 24px; border-radius: 6px;
  background: linear-gradient(#2c3bd8, #4b2fd6);
  display: block;
}
```
